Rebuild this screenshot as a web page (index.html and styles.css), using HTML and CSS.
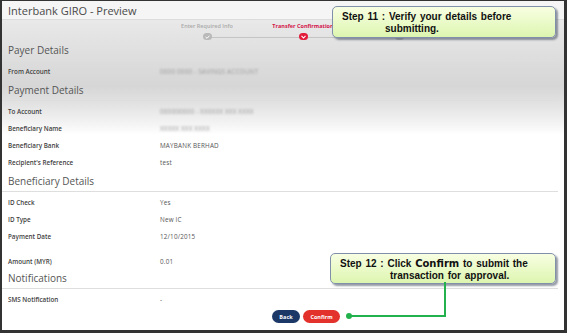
FILE: index.html
```html
<!DOCTYPE html>
<html>
<head>
<meta name="viewport" content="width=device-width, initial-scale=1">
<link rel="stylesheet" href="styles.css">
</head>
<body>

<div class="frame">

  <div class="title">Interbank GIRO - Preview</div>

  <div class="stepper">
    <div class="step">
      <span class="step__label">Enter Required Info</span>
      <span class="step__dot">
        <svg width="5" height="4" viewBox="0 0 5 4"><polyline points="0.5,2 2,3.3 4.5,0.7" fill="none" stroke="#fff" stroke-width="1"/></svg>
      </span>
    </div>
    <div class="step step--active">
      <span class="step__label">Transfer Confirmation</span>
      <span class="step__dot">
        <svg width="5" height="4" viewBox="0 0 5 4"><polyline points="0.5,0.8 2.5,3 4.5,0.8" fill="none" stroke="#fff" stroke-width="1.1"/></svg>
      </span>
    </div>
    <div class="step">
      <span class="step__label"></span>
      <span class="step__dot"></span>
    </div>
  </div>

  <h2 class="section">Payer Details</h2>
  <div class="row row--first"><span class="label">From Account</span><span class="value blur">0000 0000 - SAVINGS ACCOUNT</span></div>

  <h2 class="section">Payment Details</h2>
  <div class="row row--first"><span class="label">To Account</span><span class="value blur">000000000 - XXXXXX XXX XXXX</span></div>
  <div class="row"><span class="label">Beneficiary Name</span><span class="value blur">XXXXX XXX XXXX</span></div>
  <div class="row"><span class="label">Beneficiary Bank</span><span class="value">MAYBANK BERHAD</span></div>
  <div class="row"><span class="label">Recipient's Reference</span><span class="value">test</span></div>

  <h2 class="section">Beneficiary Details</h2>
  <div class="row row--first"><span class="label">ID Check</span><span class="value">Yes</span></div>
  <div class="row"><span class="label">ID Type</span><span class="value">New IC</span></div>
  <div class="row"><span class="label">Payment Date</span><span class="value">12/10/2015</span></div>
  <div class="row row--amount"><span class="label">Amount (MYR)</span><span class="value">0.01</span></div>

  <h2 class="section">Notifications</h2>
  <div class="row row--first"><span class="label">SMS Notification</span><span class="value">-</span></div>

  <div class="actions">
    <button class="btn btn--back">Back</button>
    <button class="btn btn--confirm">Confirm</button>
  </div>

  <div class="callout callout--top">
    <p>Step 11 : Verify your details before</p>
    <p class="indent">submitting.</p>
  </div>

  <div class="callout callout--bottom">
    <p>Step 12 : Click <b>Confirm</b> to submit the</p>
    <p class="indent">transaction for approval.</p>
  </div>

  <svg class="connector" width="110" height="40" viewBox="0 0 110 40">
    <polyline points="4,34 100,34 100,0" fill="none" stroke="#22b14c" stroke-width="2"/>
    <circle cx="4" cy="34" r="3" fill="#22b14c"/>
  </svg>

</div>

</body>
</html>
```

FILE: styles.css
```css
body {
  margin: 0;
  font-family: "Open Sans", "Liberation Sans", sans-serif;
}

.frame {
  position: relative;
  width: 567px;
  height: 333px;
  box-sizing: border-box;
  border-style: solid;
  border-color: #333;
  border-width: 1px 3px 3px 2px;
  overflow: hidden;
  background: linear-gradient(to bottom,
    #f5f5f5 0, #f5f5f5 18px,
    #e9e9e9 19px, #dedede 55px, #d6d6d6 85px,
    #e4e4e4 105px, #f3f3f3 122px, #ffffff 134px);
}

.title {
  height: 18px;
  line-height: 19px;
  padding-left: 6px;
  font-size: 11px;
  color: #4a4a4a;
  border-bottom: 1px solid #dcdcdc;
}

.stepper {
  position: relative;
  display: flex;
  height: 20px;
  padding-left: 157px;
}

.stepper:before {
  content: "";
  position: absolute;
  left: 202px;
  top: 17px;
  width: 200px;
  height: 1px;
  background: #c4c4c4;
}

.step {
  position: relative;
  width: 96px;
  display: flex;
  flex-direction: column;
  align-items: center;
}

.step__label {
  height: 8px;
  margin-top: 2px;
  font-size: 5.5px;
  font-weight: 600;
  color: #a9a9a9;
  white-space: nowrap;
}

.step__dot {
  display: flex;
  align-items: center;
  justify-content: center;
  margin-top: 3px;
  width: 9px;
  height: 8px;
  border-radius: 4px;
  background: #b9b9b9;
}

.step--active .step__label {
  color: #d3164a;
  font-weight: 700;
}

.step--active .step__dot {
  background: #e21c3a;
}

.section {
  margin: 1px 6px 0 0;
  padding-left: 6px;
  height: 19px;
  line-height: 19px;
  font-size: 10px;
  font-weight: 400;
  color: #555;
  border-bottom: 1px solid #dedede;
}

.row {
  display: flex;
  align-items: center;
  height: 17px;
  padding-left: 6px;
  font-size: 6.3px;
}

.row--first {
  margin-top: 2px;
}

.row--amount {
  margin-top: 10px;
  height: 13px;
}

.label {
  width: 152px;
  font-weight: 600;
  color: #3f3f3f;
}

.value {
  color: #555;
  letter-spacing: 0.2px;
}

.blur {
  color: #9a9a9a;
  filter: blur(1.2px);
}

.actions {
  display: flex;
  gap: 3px;
  margin-top: 2px;
  padding-left: 270px;
}

.btn {
  height: 13px;
  padding: 0;
  border: none;
  border-radius: 7px;
  color: #fff;
  font-family: "Open Sans", sans-serif;
  font-size: 5.5px;
  font-weight: 700;
}

.btn--back {
  width: 28px;
  background: #1c3867;
}

.btn--confirm {
  width: 37px;
  background: #e3312b;
}

.callout {
  position: absolute;
  box-sizing: border-box;
  padding: 4px 0 0 9px;
  border: 1px solid #8090aa;
  border-radius: 5px;
  background: linear-gradient(to bottom, #f8ffe2, #ddf5b0);
  box-shadow: 2px 2px 2px rgba(60, 70, 90, 0.55);
  font-family: "Liberation Sans", Arial, sans-serif;
  font-size: 10px;
  font-weight: 700;
  color: #111;
}

.callout p {
  margin: 0;
  line-height: 11.5px;
  word-spacing: 1px;
}

.callout--top {
  left: 330px;
  top: 5px;
  width: 224px;
  height: 32px;
}

.callout--top .indent {
  padding-left: 43px;
}

.callout--bottom {
  left: 328px;
  top: 252px;
  width: 226px;
  height: 31px;
}

.callout--bottom .indent {
  padding-left: 50px;
}

.callout b {
  font-weight: 900;
  font-family: "DejaVu Sans", sans-serif;
  font-size: 10px;
}

.connector {
  position: absolute;
  left: 343px;
  top: 281px;
}
```
